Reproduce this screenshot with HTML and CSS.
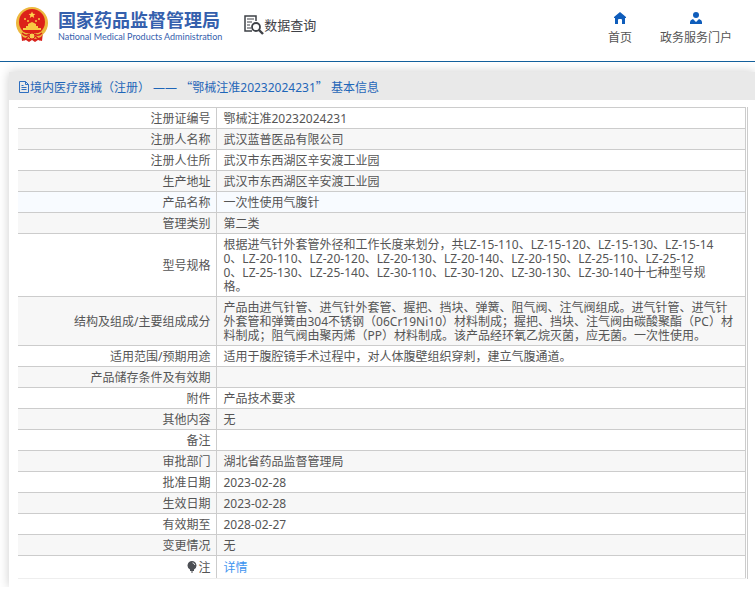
FILE: index.html
```html
<!DOCTYPE html>
<html lang="zh-CN">
<head>
  <meta charset="UTF-8" />
  <meta name="viewport" content="width=device-width, initial-scale=1.0"/>
  <title>国家药品监督管理局 数据查询</title>
  <link rel="stylesheet" href="styles.css">
</head>
<body>
  <header class="header">
    <a href="#" class="logo">
      <svg class="emblem" viewBox="0 0 32 35" aria-hidden="true">
        <path d="M5 25l1 9 4-1 3 2 3-2 3 2 3-2 4 1 1-9z" fill="#d8221c"/>
        <circle cx="16" cy="16" r="16" fill="#edb83e"/>
        <circle cx="16" cy="15" r="13" fill="#dc2119"/>
        <path d="M16 4.500l1 2.200 2.400.2-1.800 1.600.6 2.400-2.200-1.300-2.200 1.300.6-2.400-1.800-1.600 2.400-.2z" fill="#ffd84f"/>
        <g fill="#f8c842">
          <circle cx="9" cy="12" r="1"/>
          <circle cx="12" cy="14" r="1"/>
          <circle cx="20" cy="14" r="1"/>
          <circle cx="23" cy="12" r="1"/>
          <path d="M12 17l4-2 4 2v2h2v2h3v2H7v-2h3v-2h2z"/>
        </g>
        <path d="M4 24q12 5 24 0l-3 6q-9 4-18 0z" fill="#edb83e"/>
        <path d="M6 26q4 4 7 1M26 26q-4 4-7 1M8 33l5-4M24 33l-5-4" fill="none" stroke="#d8221c" stroke-width="1.500"/>
        <circle cx="16" cy="29" r="3" fill="#f8cf52" stroke="#d8221c"/>
      </svg>
      <span class="logo-text">
        <span class="logo-cn">国家药品监督管理局</span>
        <span class="logo-en">National Medical Products Administration</span>
      </span>
    </a>
    <a href="#" class="query">
      <svg class="query-icon" viewBox="0 0 20 20" fill="none" stroke="#3e4147" aria-hidden="true">
        <path d="M12 6V1H1v15h7" stroke-width="1.500"/>
        <path d="M3 4h7M3 7h5M3 10h3M3 13h4"/>
        <circle cx="12" cy="12" r="4" stroke-width="1.800"/>
        <path d="M15 15l4 4" stroke-width="2.400"/>
      </svg>
      <span>数据查询</span>
    </a>
    <nav class="nav">
      <a href="#" class="nav-link">
        <svg class="nav-icon" viewBox="0 0 12 12" fill="#0f5dbb" aria-hidden="true">
          <path d="M6 0L0 5v1h1v6h3V8q0-1 1-1h2q1 0 1 1v4h3V6h1V5z"/>
        </svg>
        <span>首页</span>
      </a>
      <a href="#" class="nav-link">
        <svg class="nav-icon" viewBox="0 0 12 12" fill="#0f5dbb" aria-hidden="true">
          <circle cx="6" cy="3" r="3"/>
          <path d="M0 12v-2q0-2 3-3l3 3 3-3q3 1 3 3v2z"/>
        </svg>
        <span>政务服务门户</span>
      </a>
    </nav>
  </header>

  <main class="card">
    <h1 class="card-title">
      <svg class="doc-icon" viewBox="0 0 10 12" fill="none" stroke="#2f6fc0" aria-hidden="true">
        <path d="M.5 .5h6l3 3v8h-9zM6.500 .5v3h3M2.500 4.500h2M2.500 6.500h5M2.500 8.500h5"/>
      </svg>
      <span>境内医疗器械（注册） —— <span class="quote">“</span>鄂械注准20232024231<span class="quote">”</span> 基本信息</span>
    </h1>
    <div class="table-wrap">
      <table class="info">
        <tr><th scope="row">注册证编号</th><td>鄂械注准20232024231</td></tr>
        <tr><th scope="row">注册人名称</th><td>武汉蓝普医品有限公司</td></tr>
        <tr><th scope="row">注册人住所</th><td>武汉市东西湖区辛安渡工业园</td></tr>
        <tr><th scope="row">生产地址</th><td>武汉市东西湖区辛安渡工业园</td></tr>
        <tr class="hover"><th scope="row">产品名称</th><td>一次性使用气腹针</td></tr>
        <tr><th scope="row">管理类别</th><td>第二类</td></tr>
        <tr><th scope="row">型号规格</th><td>根据进气针外套管外径和工作长度来划分，共LZ-15-110、LZ-15-120、LZ-15-130、LZ-15-14<br>0、LZ-20-110、LZ-20-120、LZ-20-130、LZ-20-140、LZ-20-150、LZ-25-110、LZ-25-12<br>0、LZ-25-130、LZ-25-140、LZ-30-110、LZ-30-120、LZ-30-130、LZ-30-140十七种型号规<br>格。</td></tr>
        <tr><th scope="row">结构及组成/主要组成成分</th><td>产品由进气针管、进气针外套管、握把、挡块、弹簧、阻气阀、注气阀组成。进气针管、进气针<br>外套管和弹簧由304不锈钢（06Cr19Ni10）材料制成；握把、挡块、注气阀由碳酸聚酯（PC）材<br>料制成；阻气阀由聚丙烯（PP）材料制成。该产品经环氧乙烷灭菌，应无菌。一次性使用。</td></tr>
        <tr><th scope="row">适用范围/预期用途</th><td>适用于腹腔镜手术过程中，对人体腹壁组织穿刺，建立气腹通道。</td></tr>
        <tr><th scope="row">产品储存条件及有效期</th><td></td></tr>
        <tr><th scope="row">附件</th><td>产品技术要求</td></tr>
        <tr><th scope="row">其他内容</th><td>无</td></tr>
        <tr><th scope="row">备注</th><td></td></tr>
        <tr><th scope="row">审批部门</th><td>湖北省药品监督管理局</td></tr>
        <tr><th scope="row">批准日期</th><td>2023-02-28</td></tr>
        <tr><th scope="row">生效日期</th><td>2023-02-28</td></tr>
        <tr><th scope="row">有效期至</th><td>2028-02-27</td></tr>
        <tr><th scope="row">变更情况</th><td>无</td></tr>
        <tr class="note">
          <th scope="row">
            <svg class="bulb" viewBox="0 0 10 12" fill="#4c4f54" aria-hidden="true">
              <path d="M5 0a4.500 4.500 0 0 1 2 8.500V10H3V8.500A4.500 4.500 0 0 1 5 0z"/>
              <path d="M4 10.500h2v1H4z"/>
              <path d="M5.500 1.800q2 .3 2.300 2.200" fill="none" stroke="#fff" stroke-width=".8"/>
            </svg>注</th>
          <td><a href="#" class="detail">详情</a></td>
        </tr>
      </table>
    </div>
  </main>
</body>
</html>
```
FILE: styles.css
```css
* {
  margin: 0;
  padding: 0;
  box-sizing: border-box;
}

body {
  font-family: 'Noto Sans', 'Noto Sans CJK SC', sans-serif;
  font-size: 12px;
  line-height: 14px;
  background: #fff;
  color: #555;
}

a {
  text-decoration: none;
  color: inherit;
}

/* Header */
.header {
  display: flex;
  align-items: flex-start;
  height: 62px;
  padding: 0 23px 0 16px;
  border-bottom: 1px solid #14609c;
}

.logo {
  display: flex;
  gap: 10px;
  padding-top: 7px;
}

.emblem {
  width: 32px;
  height: 35px;
}

.logo-text {
  display: flex;
  flex-direction: column;
  padding-top: 2px;
  color: #3560ad;
  white-space: nowrap;
}

.logo-cn {
  font-size: 18px;
  line-height: 22px;
  font-weight: bold;
}

.logo-en {
  font-family: Lato, sans-serif;
  font-size: 9px;
  line-height: 12px;
}

.query {
  display: flex;
  align-items: center;
  margin-left: 22px;
  padding-top: 15px;
  font-size: 13px;
  line-height: 20px;
  color: #3e4147;
}

.query-icon {
  width: 20px;
  height: 20px;
}

.nav {
  display: flex;
  gap: 28px;
  margin-left: auto;
  padding-top: 12px;
}

.nav-link {
  display: flex;
  flex-direction: column;
  align-items: center;
  gap: 7px;
}

.nav-icon {
  width: 12px;
  height: 12px;
}

/* Record card */
.card {
  margin: 10px 0 0 9px;
  padding-bottom: 8px;
  background: #fff;
  box-shadow: 0 0 10px rgba(0, 0, 0, 0.2);
}

.card-title {
  display: flex;
  align-items: center;
  gap: 1px;
  height: 28px;
  padding: 2px 0 0 10px;
  background: #e9e9e9;
  color: #1f66b8;
  font-size: 12px;
  font-weight: normal;
}

.quote {
  font-family: 'Noto Sans CJK SC', sans-serif;
}

.doc-icon {
  width: 10px;
  height: 12px;
}

.table-wrap {
  margin: 7px 7px 0 9px;
  border-right: 1px solid #ccc;
  padding-right: 1px;
}

.info {
  width: 100%;
  border-collapse: collapse;
  border-right: 1px solid #ccc;
}

.info th,
.info td {
  padding: 4px 5px 2px;
  height: 21px;
  border-top: 1px solid #ccc;
  word-break: break-all;
}

.info th {
  width: 198px;
  border-right: 1px solid #ccc;
  font-weight: normal;
  text-align: right;
}

.info td {
  padding-left: 7px;
  text-align: left;
}

.info tr:nth-child(even) {
  background: #f7f7f7;
}

.info tr.hover {
  background: #f8fbff;
}

.info tr.note th,
.info tr.note td {
  height: 23px;
  border-bottom: 1px solid #eee;
}

.bulb {
  width: 10px;
  height: 12px;
  margin-right: 1px;
  vertical-align: -1px;
}

.detail {
  color: #3d94f0;
}
```
